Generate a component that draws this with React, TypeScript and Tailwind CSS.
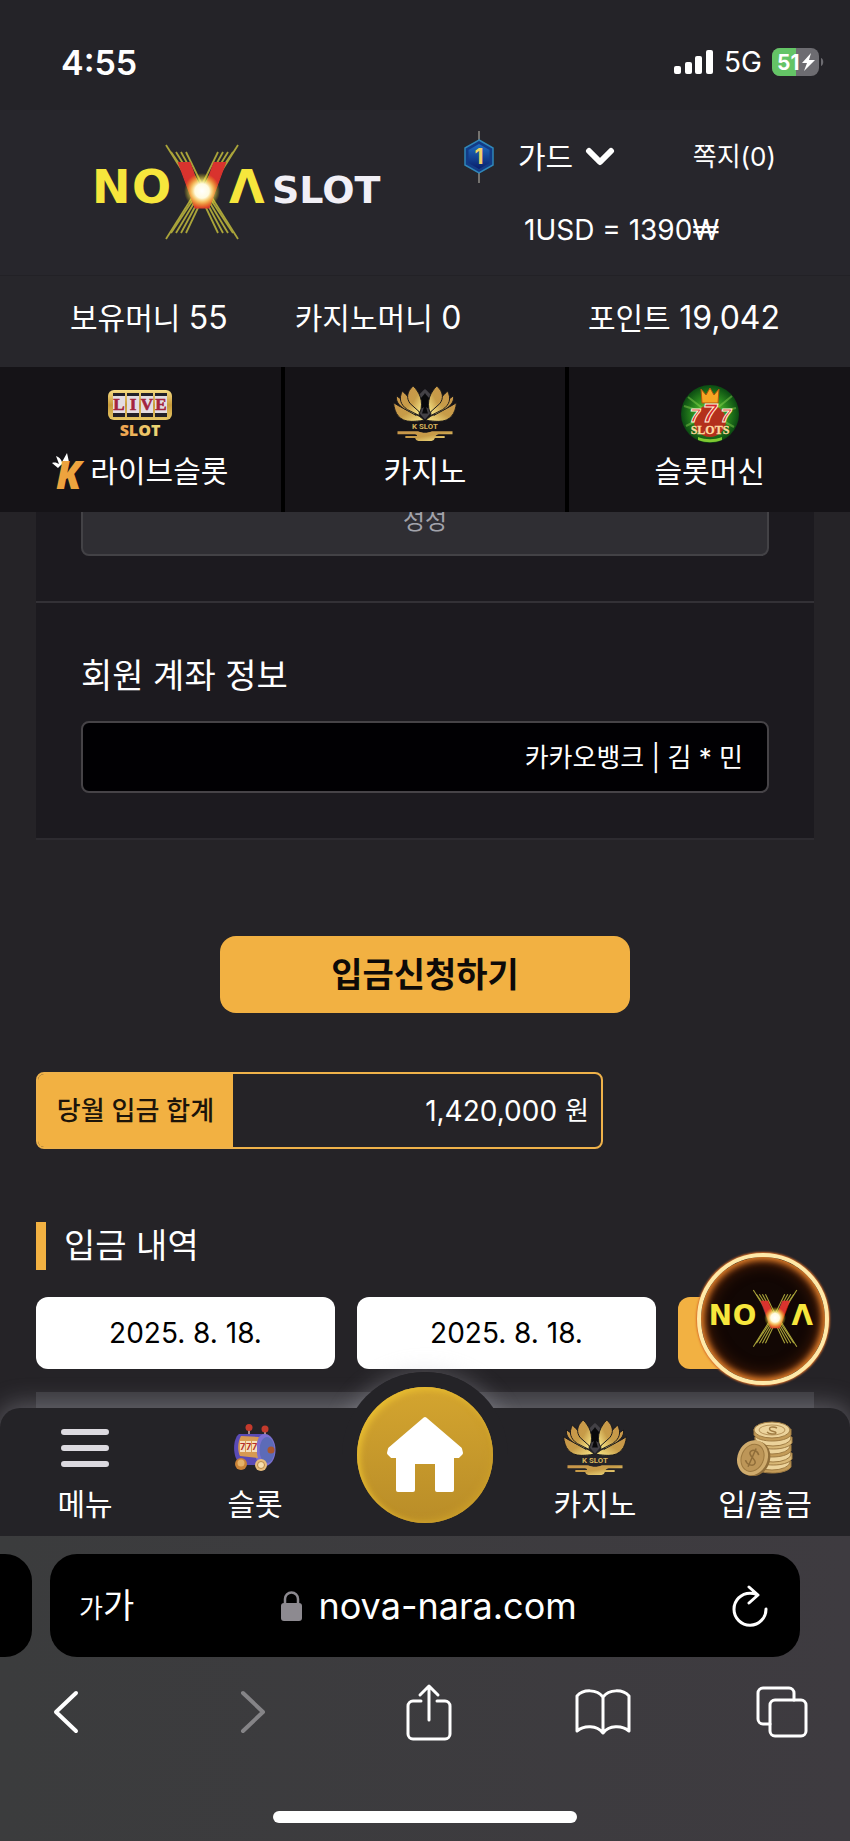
import type { ReactNode } from "react";

const sansFont = "font-['Inter','Noto_Sans_CJK_KR',sans-serif]";

const rays = [0, 5, 10, 15, 20];

function NovaMark({ gradientId }: { gradientId: string }) {
  return (
    <>
      <defs>
        <radialGradient id={gradientId}>
          <stop offset="0" stopColor="#fff" />
          <stop offset="0.4" stopColor="#fffbe0" />
          <stop offset="0.6" stopColor="#fff27a" stopOpacity="0.75" />
          <stop offset="1" stopColor="#ffe100" stopOpacity="0" />
        </radialGradient>
      </defs>
      <g stroke="#aaa43a" strokeWidth="1.8">
        {rays.map((offset, i) => (
          <g key={offset}>
            <line x1={73 + offset} y1={i === 0 ? 0 : 7} x2={102 + offset / 2} y2="46" />
            <line x1={145 - offset} y1={i === 0 ? 0 : 7} x2={116 - offset / 2} y2="46" />
            <line x1={73 + offset} y1={i === 0 ? 94 : 88} x2={102 + offset / 2} y2="48" />
            <line x1={145 - offset} y1={i === 0 ? 94 : 88} x2={116 - offset / 2} y2="48" />
          </g>
        ))}
      </g>
      <g fill="#f6e63c" fontFamily="DejaVu Sans" fontWeight="bold" fontSize="46">
        <text x="-1" y="58">N</text>
        <text x="39" y="58">O</text>
        <text x="136" y="58">Λ</text>
      </g>
      <text
        x="109"
        y="63"
        textAnchor="middle"
        fontFamily="DejaVu Sans"
        fontWeight="bold"
        fontSize="62"
        fill="#d9332e"
        stroke="#d9332e"
        strokeWidth="1"
      >
        V
      </text>
      <circle cx="109" cy="46" r="18" fill={`url(#${gradientId})`} />
    </>
  );
}

function NovaSlotLogo() {
  return (
    <svg
      className="h-24 w-[296px] shrink-0 overflow-visible"
      viewBox="0 0 296 96"
      role="img"
      aria-label="NOVA SLOT"
    >
      <NovaMark gradientId="logo-flare" />
      <text
        x="179"
        y="58"
        fontFamily="DejaVu Sans"
        fontWeight="bold"
        fontSize="38"
        fill="#f1eff6"
      >
        SLOT
      </text>
    </svg>
  );
}

function SignalIcon() {
  return (
    <svg className="h-6 w-10" viewBox="0 0 40 24" fill="#fff">
      <rect x="0" y="16" width="7" height="8" rx="2" />
      <rect x="11" y="12" width="7" height="12" rx="2" />
      <rect x="21" y="6" width="7" height="18" rx="2" />
      <rect x="32" y="0" width="7" height="24" rx="2" />
    </svg>
  );
}

function BatteryIcon() {
  return (
    <svg className="h-7 w-[52px]" viewBox="0 0 52 28">
      <defs>
        <clipPath id="battery-shape">
          <rect width="47" height="28" rx="8" />
        </clipPath>
      </defs>
      <g clipPath="url(#battery-shape)">
        <rect width="47" height="28" fill="#6d6c71" />
        <rect width="24" height="28" fill="#64c466" />
      </g>
      <path d="M49 10c3 1 3 7 0 8z" fill="#6d6c71" />
      <text x="5" y="22" fontFamily="Inter" fontWeight="700" fontSize="21" fill="#fff">
        51
      </text>
      <path d="M39 5 30 15h5l-3 8 11-11h-6z" fill="#fff" />
    </svg>
  );
}

function RankBadge() {
  return (
    <svg className="h-[52px] w-[30px]" viewBox="0 0 30 52">
      <defs>
        <linearGradient id="rank-fill" x1="0" y1="0" x2="0" y2="1">
          <stop offset="0" stopColor="#1f6fc4" />
          <stop offset="1" stopColor="#0a1f6b" />
        </linearGradient>
      </defs>
      <path d="M15 0v52" stroke="#8f8d86" strokeWidth="1.5" />
      <path d="m15 9 14 8v17l-14 8-14-8V17z" fill="#123b86" stroke="#2f86b8" strokeWidth="1.5" />
      <path d="m15 13 10.500 6v13L15 38 4.500 32V19z" fill="url(#rank-fill)" />
      <text
        x="15"
        y="33"
        textAnchor="middle"
        fontFamily="Inter"
        fontWeight="700"
        fontSize="21"
        fill="#f2d264"
      >
        1
      </text>
    </svg>
  );
}

function LiveSlotIcon() {
  return (
    <svg className="h-12 w-16 overflow-visible" viewBox="0 0 64 48">
      <defs>
        <linearGradient id="live-gold" x1="0" y1="0" x2="0" y2="1">
          <stop offset="0" stopColor="#f6dc84" />
          <stop offset="0.5" stopColor="#c79a3a" />
          <stop offset="1" stopColor="#e8c866" />
        </linearGradient>
        <linearGradient id="slot-gold" x1="0" y1="0" x2="1" y2="0">
          <stop offset="0" stopColor="#f0a04c" />
          <stop offset="1" stopColor="#e8dc78" />
        </linearGradient>
      </defs>
      <rect y="0" width="64" height="30" rx="6" fill="url(#live-gold)" />
      {["L", "I", "V", "E"].map((letter, i) => (
        <g key={letter}>
          <rect x={5 + i * 14} y="3" width="12" height="24" fill="#232128" />
          <rect x={5 + i * 14} y="6" width="12" height="17" fill="#e4dde2" />
          <text
            x={11 + i * 14}
            y="20"
            textAnchor="middle"
            fontFamily="Liberation Serif"
            fontWeight="700"
            fontSize="17"
            fill="#a3243d"
            stroke="#a3243d"
            strokeWidth="0.6"
          >
            {letter}
          </text>
        </g>
      ))}
      <text
        x="32"
        y="46"
        textAnchor="middle"
        fontFamily="Open Sans"
        fontWeight="800"
        fontSize="16"
        fill="url(#slot-gold)"
      >
        SLOT
      </text>
    </svg>
  );
}

function CrownKIcon() {
  return (
    <svg className="h-10 w-[34px] overflow-visible" viewBox="0 0 34 40">
      <path d="M0 12c3-1 5 0 7 1L4 5c3 1 5 3 6 6l5-9 2 9c-4 0-8 2-11 6z" fill="#fff" />
      <text
        x="4"
        y="38"
        fontFamily="Open Sans"
        fontWeight="800"
        fontStyle="italic"
        fontSize="38"
        fill="#eda33e"
      >
        K
      </text>
    </svg>
  );
}

function LotusIcon({ id }: { id: string }) {
  const petals = (
    <>
      <path d="M0 17C1 28 6 36 18 36c6 0 11-1 13-1C27 29 12 25 0 17z" />
      <path d="M3 10c-1 6 3 11 11 15l9 5C20 22 11 16 3 10z" />
      <path d="M9 5c-4 8-2 14 5 19l12 6C28 21 17 14 9 5z" />
      <path d="M20 0c-7 6-7 13-3 18l10 9C31 15 26 6 20 0z" />
    </>
  );

  return (
    <svg className="h-14 w-16" viewBox="0 0 64 57">
      <defs>
        <linearGradient id={`${id}-gold`} x1="0" y1="0" x2="1" y2="1">
          <stop offset="0" stopColor="#c9964a" />
          <stop offset="0.5" stopColor="#c79c48" />
          <stop offset="1" stopColor="#fbeb8c" />
        </linearGradient>
      </defs>
      <path d="M32 3c5 4 9 9 9 15 0 7-5 11-9 16-4-5-9-9-9-16 0-6 4-11 9-15z" fill="#434146" />
      <path
        d="M32 7c2 4 8 7 8 12 0 4-5 5-7 2l2 7h-6l2-7c-2 3-7 2-7-2 0-5 6-8 8-12z"
        fill="#08080a"
      />
      <g fill={`url(#${id}-gold)`}>
        <g stroke="#1a181b">
          {petals}
          <g transform="matrix(-1 0 0 1 64 0)">{petals}</g>
        </g>
        <path d="M4 46h21c5 2 9 2 14 0h21v3H46c-3 1-4 2-2 2h8v2H42c-1 3-3 3-5 3H27c-2 0-4 0-5-3H12v-2h12c0-2-2-2-4-2H4z" />
      </g>
      <text
        x="32"
        y="44"
        textAnchor="middle"
        fontFamily="Roboto"
        fontWeight="700"
        fontSize="8"
        fill="#d8b45c"
      >
        K SLOT
      </text>
    </svg>
  );
}

function SevensIcon() {
  return (
    <svg className="h-[60px] w-[60px]" viewBox="0 0 60 60">
      <defs>
        <radialGradient id="sevens-bg">
          <stop offset="0" stopColor="#8ae03a" />
          <stop offset="0.6" stopColor="#2b8a1e" />
          <stop offset="1" stopColor="#0b4a12" />
        </radialGradient>
      </defs>
      <circle cx="30" cy="30" r="29" fill="url(#sevens-bg)" />
      <g stroke="#9be25a" strokeOpacity="0.4" strokeWidth="2">
        <path d="M30 30 8 13M30 30 4 22M30 30 52 12M30 30 56 24M30 30 6 42M30 30 54 43" />
      </g>
      <circle cx="30" cy="37" r="16" fill="#b3301c" />
      <path d="m21 5 5 6 4-7 4 7 5-6-1 14H22z" fill="#f5a623" stroke="#b3540f" />
      <g
        fill="#d8232a"
        stroke="#fff1d6"
        strokeWidth="1"
        fontFamily="Liberation Sans"
        fontWeight="700"
        fontStyle="italic"
        textAnchor="middle"
      >
        <text x="15" y="38" fontSize="18">7</text>
        <text x="46" y="38" fontSize="18">7</text>
        <text x="30" y="38" fontSize="25">7</text>
      </g>
      <text
        x="30"
        y="50"
        textAnchor="middle"
        fontFamily="Liberation Serif"
        fontWeight="700"
        fontSize="12"
        fill="#ffd9a0"
        stroke="#ffd9a0"
        strokeWidth="0.3"
      >
        SLOTS
      </text>
      <path d="M18 53c8 3 16 3 24 0v3c-8 3-16 3-24 0z" fill="#7fc832" />
    </svg>
  );
}

function SlotMachineIcon() {
  return (
    <svg className="h-12 w-11" viewBox="0 0 44 48">
      <path d="M16 5v8M32 6v9" stroke="#a98a8a" strokeWidth="2" />
      <circle cx="16" cy="3.500" r="3.500" fill="#c43a2c" />
      <circle cx="32" cy="5" r="3.500" fill="#c43a2c" />
      <path d="M6 10h26v31H9C-1 37-1 15 6 10z" fill="#5a4bb5" />
      <ellipse cx="32" cy="26" rx="10.500" ry="16" fill="#7c6fd0" />
      <ellipse cx="34" cy="26" rx="7.500" ry="13" fill="#5c6bb8" />
      <circle cx="38" cy="26" r="3.500" fill="#a9552e" />
      <path d="m8 12 18 1c-3 6-3 14-1 21l-18-2C4 26 5 17 8 12z" fill="#d79a52" />
      <g fill="#f4dfbc">
        <rect x="7" y="17" width="5" height="11" />
        <rect x="13" y="17" width="5" height="11" />
        <rect x="19" y="17" width="5" height="11" />
      </g>
      <g fill="#b5302a" fontFamily="Inter" fontWeight="700" fontSize="9">
        <text x="7" y="26">7</text>
        <text x="13" y="26">7</text>
        <text x="19" y="26">7</text>
      </g>
      <circle cx="8" cy="40" r="6" fill="#c98236" />
      <circle cx="8" cy="39" r="3.500" fill="#e5b268" />
      <circle cx="28" cy="41" r="6" fill="#e8bd7c" />
      <circle cx="28" cy="41" r="3.500" fill="#f5deb0" stroke="#b98846" />
    </svg>
  );
}

function CoinsIcon() {
  return (
    <svg className="h-14 w-14" viewBox="0 0 56 56">
      <g stroke="#a07c43">
        {[45, 37, 29, 21, 13].map((y, i) => (
          <g key={y}>
            <path
              d={`M${17 + (i % 2)} ${y - 4}v6c4 8 32 8 37 0v-6z`}
              fill={i % 2 ? "#d8b776" : "#c39b58"}
            />
            <ellipse cx={35 + (i % 2)} cy={y - 3} rx="18" ry="8" fill="#ecd39b" />
          </g>
        ))}
      </g>
      <ellipse cx="35" cy="10" rx="13" ry="5" fill="none" stroke="#b7935a" />
      <path d="M40 8c-4-2-9-1-7 2 2 2 6 1 6 3-1 2-7 1-9-1" fill="none" stroke="#a07c43" strokeWidth="1.500" />
      <g transform="rotate(24 16 38)">
        <ellipse cx="18" cy="38" rx="15" ry="18" fill="#8f6d39" />
        <ellipse cx="15.500" cy="38" rx="15" ry="18" fill="#cfab6d" />
        <ellipse cx="15.500" cy="38" rx="11" ry="14" fill="#bd9658" stroke="#9c783f" />
        <path d="M20 33c-3-4-9-3-9 1s9 4 9 8-7 5-10 1M15 28v20" fill="none" stroke="#8f6d39" strokeWidth="1.500" />
      </g>
    </svg>
  );
}

function HamburgerIcon() {
  return (
    <svg className="h-14 w-12" viewBox="0 0 48 56" stroke="#dcdae0" strokeWidth="6" strokeLinecap="round">
      <path d="M3 12h42M3 28h42M3 44h42" />
    </svg>
  );
}

function HomeIcon() {
  return (
    <svg className="h-[78px] w-[78px]" viewBox="0 0 78 78" fill="#fff">
      <path
        d="M39 3 4 33l-1 4 3 3h6v34h15V46h24v28h15V40h6l3-3-1-4z"
        stroke="#fff"
        strokeWidth="4"
        strokeLinejoin="round"
      />
    </svg>
  );
}

const categories = [
  { label: "라이브슬롯", icon: <LiveSlotIcon />, prefix: <CrownKIcon /> },
  { label: "카지노", icon: <LotusIcon id="top-lotus" />, prefix: null },
  { label: "슬롯머신", icon: <SevensIcon />, prefix: null },
];

function NavItem({ label, icon }: { label: string; icon: ReactNode }) {
  return (
    <a href="#" className="flex flex-col items-center gap-[10px] pt-3">
      <span className="flex h-14 items-center">{icon}</span>
      <span className="text-[30px] leading-9">{label}</span>
    </a>
  );
}

function StatusBar() {
  return (
    <div className="flex h-[110px] items-center justify-between bg-[#242328] pt-[14px] pr-[26px] pl-[61px]">
      <span className="text-[34px] font-semibold">4:55</span>
      <div className="flex items-center gap-[10px]">
        <SignalIcon />
        <span className="text-[28px]">5G</span>
        <BatteryIcon />
      </div>
    </div>
  );
}

function SiteHeader() {
  return (
    <header className="relative z-10">
      <div className="flex h-[165px] bg-[#27262c] pl-[93px]">
        <div className="flex items-center">
          <NovaSlotLogo />
        </div>
        <div className="flex flex-1 flex-col gap-[33px] pt-[27px] pr-[74px] pl-[75px]">
          <div className="flex h-10 items-center">
            <RankBadge />
            <button className="ml-6 flex items-center gap-3 text-[30px] leading-10">
              가드
              <svg className="h-5 w-[30px]" viewBox="0 0 30 20" fill="none">
                <path d="m4 4 11 11L26 4" stroke="#fff" strokeWidth="6" strokeLinecap="round" strokeLinejoin="round" />
              </svg>
            </button>
            <a href="#" className="ml-auto text-[26px] leading-10">
              쪽지(0)
            </a>
          </div>
          <p className="pl-[60px] text-[28px] leading-10">1USD = 1390₩</p>
        </div>
      </div>
      <div className="flex h-[92px] items-center gap-[67px] border-t border-[#222126] bg-[#27262b] px-[70px] pb-2 text-[30px]">
        <span>
          보유머니 <span className="text-[32px]">55</span>
        </span>
        <span>
          카지노머니 <span className="text-[32px]">0</span>
        </span>
        <span className="ml-auto">
          포인트 <span className="text-[32px]">19,042</span>
        </span>
      </div>
      <nav className="grid grid-cols-3 gap-1 bg-black">
        {categories.map((category) => (
          <a
            key={category.label}
            href="#"
            className="flex flex-col items-center gap-2 bg-[#151317] pt-4 pb-[23px]"
          >
            <span className="flex h-[62px] items-center">{category.icon}</span>
            <span className="flex h-9 items-center gap-1 text-[30px] leading-9">
              {category.prefix}
              {category.label}
            </span>
          </a>
        ))}
      </nav>
    </header>
  );
}

function DepositPage() {
  return (
    <main className="-mt-7 px-9">
      <div className="bg-[#1c1a1f]">
        <div className="border-b-2 border-[#333136] px-[45px] pb-[45px]">
          <input
            aria-label="입금자명"
            disabled
            defaultValue="성성"
            className="block h-[72px] w-full rounded-lg border-2 border-[#434246] bg-[#2f2e33] pb-1 text-center text-[24px] text-[#a2a3ab]"
          />
        </div>
        <div className="border-b-2 border-[#2d2b30] px-[45px] pt-[49px] pb-[45px]">
          <label htmlFor="account" className="block text-[34px] leading-[48px]">
            회원 계좌 정보
          </label>
          <input
            id="account"
            readOnly
            defaultValue="카카오뱅크 | 김 * 민"
            className="mt-[21px] block h-[72px] w-full rounded-lg border-2 border-[#464347] bg-[#010003] px-6 pb-1 text-right text-[26px]"
          />
        </div>
      </div>
      <button className="mx-auto mt-24 block h-[77px] w-[410px] rounded-2xl bg-[#f2b142] text-[34px] font-bold text-[#0d0a08]">
        입금신청하기
      </button>
      <div className="mt-[59px] flex h-[77px] w-[567px] overflow-hidden rounded-lg border-2 border-[#efb24a] text-[26px]">
        <span className="flex w-[195px] items-center justify-center bg-[#f2b142] font-medium text-[#1c140a]">
          당월 입금 합계
        </span>
        <span className="flex flex-1 items-center justify-end gap-2 pr-3">
          <span className="text-[28px]">1,420,000</span>원
        </span>
      </div>
      <h2 className="mt-[73px] border-l-[10px] border-[#f2b142] pl-[18px] text-[34px] leading-[48px]">
        입금 내역
      </h2>
      <div className="mt-[27px] grid grid-cols-[299fr_299fr_136fr] gap-[22px]">
        <input
          aria-label="시작일"
          defaultValue="2025. 8. 18."
          className="h-[72px] w-full min-w-0 rounded-xl bg-white text-center text-[28px] text-black"
        />
        <input
          aria-label="종료일"
          defaultValue="2025. 8. 18."
          className="h-[72px] w-full min-w-0 rounded-xl bg-white text-center text-[28px] text-black"
        />
        <button aria-label="조회" className="h-[72px] rounded-xl bg-[#f2b142]" />
      </div>
      <div className="mt-[23px] h-4 bg-[#3a393e]" />
    </main>
  );
}

function BottomNav() {
  return (
    <nav className="relative grid h-32 grid-cols-5 rounded-t-[20px] bg-[#242327] shadow-[0_-2px_24px_2px_rgba(190,190,200,0.35)]">
      <NavItem label="메뉴" icon={<HamburgerIcon />} />
      <NavItem label="슬롯" icon={<SlotMachineIcon />} />
      <div className="flex justify-center">
        <div className="absolute -top-9 h-[166px] w-[166px] rounded-full shadow-[0_0_22px_2px_rgba(190,190,200,0.3)] [clip-path:inset(-30px_-30px_130px_-30px)]" />
        <div className="absolute -top-9 h-[164px] w-[166px] rounded-t-full bg-[#242327]" />
        <a
          href="#"
          aria-label="홈"
          className="absolute -top-[21px] flex h-[136px] w-[136px] items-center justify-center rounded-full bg-linear-to-b from-[#d4a52f] to-[#b98d28] shadow-[inset_3px_3px_6px_#e8bd31,inset_-4px_-3px_6px_#c79a2a]"
        >
          <HomeIcon />
        </a>
      </div>
      <NavItem label="카지노" icon={<LotusIcon id="nav-lotus" />} />
      <NavItem label="입/출금" icon={<CoinsIcon />} />
      <a
        href="#"
        aria-label="NOVA"
        className="absolute -top-[155px] right-[21px] flex h-[132px] w-[132px] items-center justify-center rounded-full border-4 border-[#ffe9a8] bg-[#120704] shadow-[0_0_2px_1px_#d9702c,inset_0_0_6px_3px_#e8842c,inset_0_0_16px_5px_#5a2408]"
      >
        <svg className="h-[58px] w-[108px] overflow-visible" viewBox="0 0 178 96">
          <NovaMark gradientId="float-flare" />
        </svg>
      </a>
    </nav>
  );
}

function BrowserBar() {
  return (
    <footer className="relative bg-linear-to-r from-[#3b3c3d] to-[#3e3b40] pt-[18px] pb-[18px]">
      <div className="flex h-[103px] gap-[18px]">
        <div className="w-8 rounded-r-[27px] bg-black" />
        <div className="mr-[50px] flex flex-1 items-center rounded-[27px] bg-black pr-8 pl-[29px]">
          <button aria-label="페이지 설정" className="flex items-baseline">
            <span className="text-[26px]">가</span>
            <span className="text-[34px]">가</span>
          </button>
          <div className="flex flex-1 items-center justify-center gap-4 pr-2">
            <svg className="h-[30px] w-[21px]" viewBox="0 0 21 30">
              <path d="M4 14V8a6 6 0 0 1 13 0v6" fill="none" stroke="#8d8a90" strokeWidth="2.500" />
              <rect y="12" width="21" height="18" rx="3" fill="#8d8a90" />
            </svg>
            <span className="text-[36px]">nova-nara.com</span>
          </div>
          <button aria-label="새로고침">
            <svg
              className="h-[42px] w-9"
              viewBox="0 0 36 42"
              fill="none"
              stroke="#fff"
              strokeWidth="3"
              strokeLinecap="round"
              strokeLinejoin="round"
            >
              <path d="M25 9.500C22 8.300 20 8.200 18 8.200A16 16 0 1 0 34 24M17 2l9 8-9 8" />
            </svg>
          </button>
        </div>
      </div>
      <div className="mt-[25px] flex h-[60px] items-center justify-between pr-[42px] pl-[53px] text-white">
        <button aria-label="뒤로">
          <svg className="h-11 w-[26px]" viewBox="0 0 26 44" fill="none" stroke="currentColor" strokeWidth="4" strokeLinecap="round" strokeLinejoin="round">
            <path d="M23 3 3 22l20 19" />
          </svg>
        </button>
        <button aria-label="앞으로" className="pl-[38px] text-[#858487]">
          <svg className="h-11 w-[26px]" viewBox="0 0 26 44" fill="none" stroke="currentColor" strokeWidth="4" strokeLinecap="round" strokeLinejoin="round">
            <path d="m3 3 20 19L3 41" />
          </svg>
        </button>
        <button aria-label="공유" className="pl-[16px]">
          <svg className="h-[58px] w-[46px]" viewBox="0 0 46 58" fill="none" stroke="currentColor" strokeWidth="3" strokeLinecap="round" strokeLinejoin="round">
            <path d="M15 18H7a5 5 0 0 0-5 5v28a5 5 0 0 0 5 5h32a5 5 0 0 0 5-5V23a5 5 0 0 0-5-5h-8M23 37V3M14 12l9-9 9 9" />
          </svg>
        </button>
        <button aria-label="책갈피" className="pr-[2px]">
          <svg className="h-[46px] w-14" viewBox="0 0 56 46" fill="none" stroke="currentColor" strokeWidth="3" strokeLinecap="round" strokeLinejoin="round">
            <path d="M28 8C22 0 8 0 2 7v35c7-6 20-6 26 2 6-8 19-8 26-2V7C48 0 34 0 28 8zv36" />
          </svg>
        </button>
        <button aria-label="탭">
          <svg className="h-[52px] w-[52px]" viewBox="0 0 52 52" fill="none" stroke="currentColor" strokeWidth="3" strokeLinecap="round" strokeLinejoin="round">
            <rect x="14" y="14" width="36" height="36" rx="5" />
            <path d="M14 38H7a5 5 0 0 1-5-5V7a5 5 0 0 1 5-5h26a5 5 0 0 1 5 5v7" />
          </svg>
        </button>
      </div>
      <div className="mx-auto mt-[69px] h-3 w-[304px] rounded-full bg-white" />
    </footer>
  );
}

export default function App() {
  return (
    <div className={`${sansFont} min-h-screen overflow-hidden bg-[#252327] text-white`}>
      <StatusBar />
      <SiteHeader />
      <DepositPage />
      <BottomNav />
      <BrowserBar />
    </div>
  );
}
